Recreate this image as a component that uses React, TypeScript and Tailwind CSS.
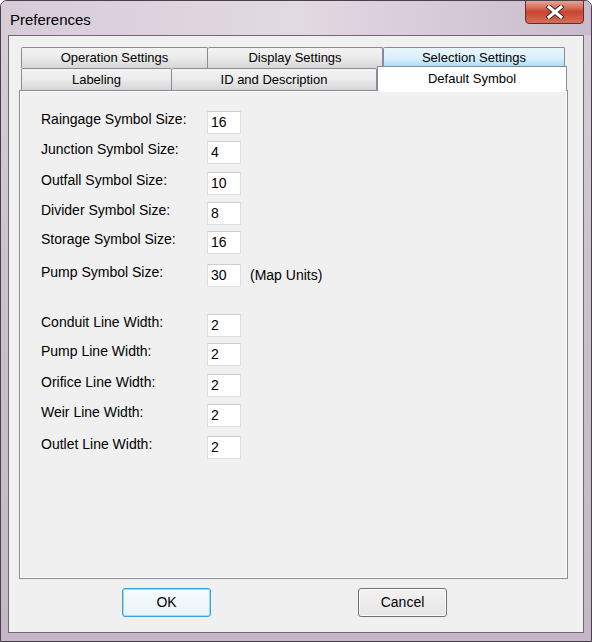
import React from 'react';

const sizeRows = [
  { label: 'Raingage Symbol Size:', value: '16', mt: 'mt-[20px]' },
  { label: 'Junction Symbol Size:', value: '4', mt: 'mt-[7px]' },
  { label: 'Outfall Symbol Size:', value: '10', mt: 'mt-[8px]' },
  { label: 'Divider Symbol Size:', value: '8', mt: 'mt-[7px]' },
  { label: 'Storage Symbol Size:', value: '16', mt: 'mt-[6px]' },
  { label: 'Pump Symbol Size:', value: '30', mt: 'mt-[10px]', note: '(Map Units)' },
];

const widthRows = [
  { label: 'Conduit Line Width:', value: '2', mt: 'mt-[27px]' },
  { label: 'Pump Line Width:', value: '2', mt: 'mt-[6px]' },
  { label: 'Orifice Line Width:', value: '2', mt: 'mt-[8px]' },
  { label: 'Weir Line Width:', value: '2', mt: 'mt-[7px]' },
  { label: 'Outlet Line Width:', value: '2', mt: 'mt-[9px]' },
];

const tabBase =
  'h-[21px] flex items-center justify-center text-[13px] text-black border border-[#898c95] border-b-0 rounded-t-[2px]';
const grayTab = tabBase + ' bg-gradient-to-b from-[#f3f3f3] via-[#ebebeb] to-[#d6d6d6]';

type Row = { label: string; value: string; mt: string; note?: string };

const FieldRow: React.FC<{ row: Row }> = ({ row }) => (
  <div className={`flex items-start ${row.mt}`}>
    <div className="w-[166px] text-[14px] leading-[16px] text-black">{row.label}</div>
    <div className="w-[34px] h-[23px] bg-white border border-[#dcdfe3] border-t-[#c9ccd1] flex items-center pl-[3px] text-[14px] text-black">
      {row.value}
    </div>
    {row.note && <div className="ml-[9px] text-[14px] leading-[22px] text-black">{row.note}</div>}
  </div>
);

const CloseIcon = () => (
  <svg width="18" height="14" viewBox="0 0 18 14">
    <path d="M3 2 L15 12 M15 2 L3 12" stroke="#3b2a28" strokeWidth="5" strokeLinecap="square" />
    <path d="M3 2 L15 12 M15 2 L3 12" stroke="#ffffff" strokeWidth="3" strokeLinecap="square" />
  </svg>
);

export default function App() {
  return (
    <div
      className="w-[592px] h-[642px] relative overflow-hidden rounded-t-[7px] border border-[#4a3f4b] bg-gradient-to-b from-[#d8cfda] via-[#cbbecd] to-[#c6b7c8] flex flex-col"
      style={{ fontFamily: '"Liberation Sans", Arial, sans-serif' }}
    >
      {/* title bar */}
      <div className="h-[34px] flex items-start relative bg-gradient-to-r from-[#d6ccd8] via-[#e2dae3] to-[#c9bbcb]">
        <div className="pl-[9px] pt-[8px] text-[15px] text-black">Preferences</div>
        <div className="absolute right-[7px] top-[-1px] w-[59px] h-[24px] rounded-b-[4px] border border-[#6b2b24] bg-gradient-to-b from-[#e4a596] via-[#c9442f] to-[#d66d57] flex items-center justify-center">
          <CloseIcon />
        </div>
      </div>

      {/* client area */}
      <div className="mx-[7px] mb-[8px] flex-1 bg-[#f0f0f0] border border-[#6f6a71] flex flex-col">
        <div className="pt-[11px] pl-[10px]">
          {/* tab rows */}
          <div className="flex px-[2px]">
            <div className={`${grayTab} w-[187px]`}>Operation Settings</div>
            <div className={`${grayTab} w-[175px] border-l-0`}>Display Settings</div>
            <div className={`${tabBase} w-[182px] border-[#3c7fb1] bg-gradient-to-b from-[#eaf6fd] via-[#d9f0fc] to-[#a7d9f5]`}>
              Selection Settings
            </div>
          </div>
          <div className="flex items-end h-[22px] px-[2px] relative z-10">
            <div className={`${grayTab} w-[151px] h-[22px]`}>Labeling</div>
            <div className={`${grayTab} w-[205px] h-[22px] border-l-0`}>ID and Description</div>
            <div className="-mb-px w-[190px] h-[25px] shrink-0 bg-white border border-[#898c95] border-b-0 flex items-start justify-center pt-[2px] text-[13px] text-black">
              Default Symbol
            </div>
          </div>

          {/* panel */}
          <div className="w-[549px] h-[489px] bg-[#f0f0f0] border border-[#898c95] shadow-[inset_1px_1px_0_#ffffff,inset_-1px_-1px_0_#ffffff]">
            <div className="pl-[21px] flex flex-col">
              {sizeRows.map(r => (
                <FieldRow key={r.label} row={r} />
              ))}
              {widthRows.map(r => (
                <FieldRow key={r.label} row={r} />
              ))}
            </div>
          </div>
        </div>

        {/* buttons */}
        <div className="flex pl-[113px] mt-[9px]">
          <button className="w-[89px] h-[29px] rounded-[3px] border border-[#3c9fd8] bg-gradient-to-b from-[#f6fbfe] to-[#eaf3f9] shadow-[inset_0_0_0_1px_#9fdcf8] text-[14px] text-black">
            OK
          </button>
          <button className="ml-[147px] w-[89px] h-[29px] rounded-[3px] border border-[#707070] bg-gradient-to-b from-[#f2f2f2] to-[#e6e6e6] shadow-[inset_0_0_0_1px_#fbfbfb] text-[14px] text-black">
            Cancel
          </button>
        </div>
      </div>
    </div>
  );
}
